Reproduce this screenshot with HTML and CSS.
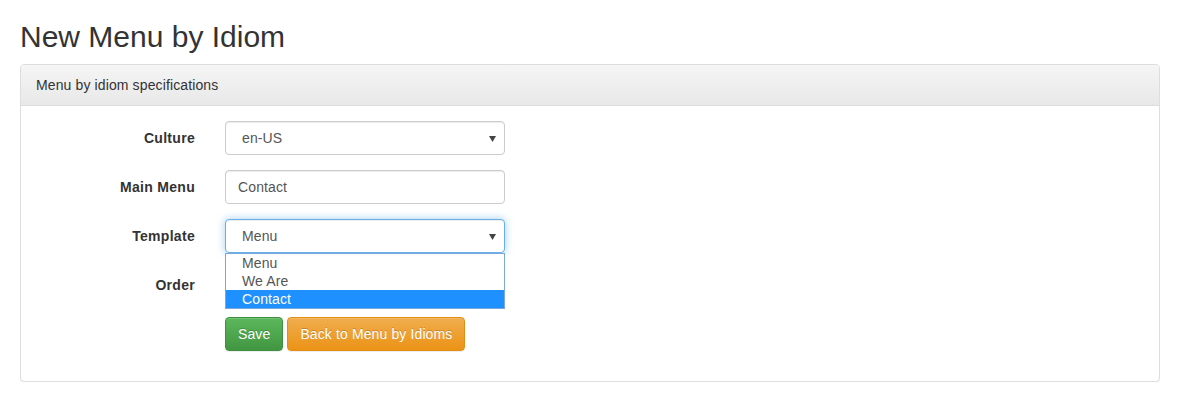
FILE: index.html
```html
<!DOCTYPE html>
<html>
<head>
<meta charset="utf-8">
<link rel="stylesheet" href="styles.css">
</head>
<body>
<div class="container">
  <h1 class="title">New Menu by Idiom</h1>
  <div class="panel">
    <div class="panel-heading">Menu by idiom specifications</div>
    <div class="panel-body">
      <div class="form-group">
        <label class="control-label">Culture</label>
        <div class="control">
          <div class="select"><span class="select-text">en-US</span><svg class="caret" width="7" height="6" viewBox="0 0 7 6"><path d="M0 0H7L3.5 6Z" fill="#444"/></svg></div>
        </div>
      </div>
      <div class="form-group">
        <label class="control-label">Main Menu</label>
        <div class="control">
          <div class="input">Contact</div>
        </div>
      </div>
      <div class="form-group">
        <label class="control-label">Template</label>
        <div class="control">
          <div class="select focused"><span class="select-text">Menu</span><svg class="caret" width="7" height="6" viewBox="0 0 7 6"><path d="M0 0H7L3.5 6Z" fill="#444"/></svg></div>
          <ul class="dropdown">
            <li class="option">Menu</li>
            <li class="option">We Are</li>
            <li class="option selected">Contact</li>
          </ul>
        </div>
      </div>
      <div class="form-group">
        <label class="control-label">Order</label>
        <div class="control">
          <div class="input"></div>
        </div>
      </div>
      <div class="form-group">
        <div class="control-label"></div>
        <div class="buttons">
          <button class="btn btn-success">Save</button>
          <button class="btn btn-warning">Back to Menu by Idioms</button>
        </div>
      </div>
    </div>
  </div>
</div>
</body>
</html>
```

FILE: styles.css
```css
* { box-sizing: border-box; }
html, body {
  margin: 0;
  padding: 0;
  background: #fff;
}
body {
  font-family: "Liberation Sans", Arial, Helvetica, sans-serif;
  font-size: 14px;
  line-height: 20px;
  color: #333;
  letter-spacing: 0.12px;
}
.container {
  padding: 0 20px;
}
.title {
  margin: 20px 0 11px;
  font-size: 30px;
  font-weight: 400;
  line-height: 33px;
  color: #333;
  letter-spacing: 0;
}
.panel {
  border: 1px solid #ddd;
  border-radius: 4px;
  box-shadow: 0 1px 1px rgba(0,0,0,.05);
  background: #fff;
}
.panel-heading {
  padding: 10px 15px;
  border-bottom: 1px solid #ddd;
  border-radius: 3px 3px 0 0;
  background: linear-gradient(to bottom, #f5f5f5 0%, #e8e8e8 100%);
  color: #333;
}
.panel-body {
  padding: 15px;
}
.form-group {
  display: flex;
  gap: 30px;
  margin-bottom: 15px;
}
.control-label {
  width: 159px;
  flex: none;
  text-align: right;
  font-weight: 700;
  padding-top: 7px;
  letter-spacing: 0.3px;
}
.control {
  position: relative;
  width: 280px;
}
.input, .select {
  height: 34px;
  border: 1px solid #ccc;
  border-radius: 4px;
  padding: 6px 12px;
  color: #555;
  box-shadow: inset 0 1px 1px rgba(0,0,0,.075);
  background: #fff;
}
.select {
  display: flex;
  align-items: center;
  justify-content: space-between;
  padding: 6px 8px 6px 16px;
}
.select.focused {
  border-color: #66afe9;
  box-shadow: inset 0 1px 1px rgba(0,0,0,.075), 0 0 8px rgba(102,175,233,.6);
}
.caret {
  display: block;
  margin-top: 1px;
}
.dropdown {
  position: absolute;
  left: 0;
  right: 0;
  top: 34px;
  margin: 0;
  padding: 0;
  list-style: none;
  border: 1px solid #7aa7dc;
  background: #fff;
  z-index: 2;
}
.option {
  height: 18px;
  line-height: 18px;
  padding-left: 16px;
  color: #555;
}
.option.selected {
  background: #1e90ff;
  color: #fff;
}
.buttons {
  display: flex;
  gap: 4px;
}
.btn {
  font-family: "Liberation Sans", Arial, Helvetica, sans-serif;
  font-size: 14px;
  line-height: 20px;
  letter-spacing: 0.12px;
  padding: 6px 12px;
  border-radius: 4px;
  border: 1px solid transparent;
  color: #fff;
  text-shadow: 0 -1px 0 rgba(0,0,0,.2);
  box-shadow: inset 0 1px 0 rgba(255,255,255,.15), 0 1px 1px rgba(0,0,0,.075);
  cursor: pointer;
}
.btn-success {
  background: linear-gradient(to bottom, #5cb85c 0%, #419641 100%);
  border-color: #3e8f3e;
}
.btn-warning {
  background: linear-gradient(to bottom, #f0ad4e 0%, #eb9316 100%);
  border-color: #e38d13;
}
```
